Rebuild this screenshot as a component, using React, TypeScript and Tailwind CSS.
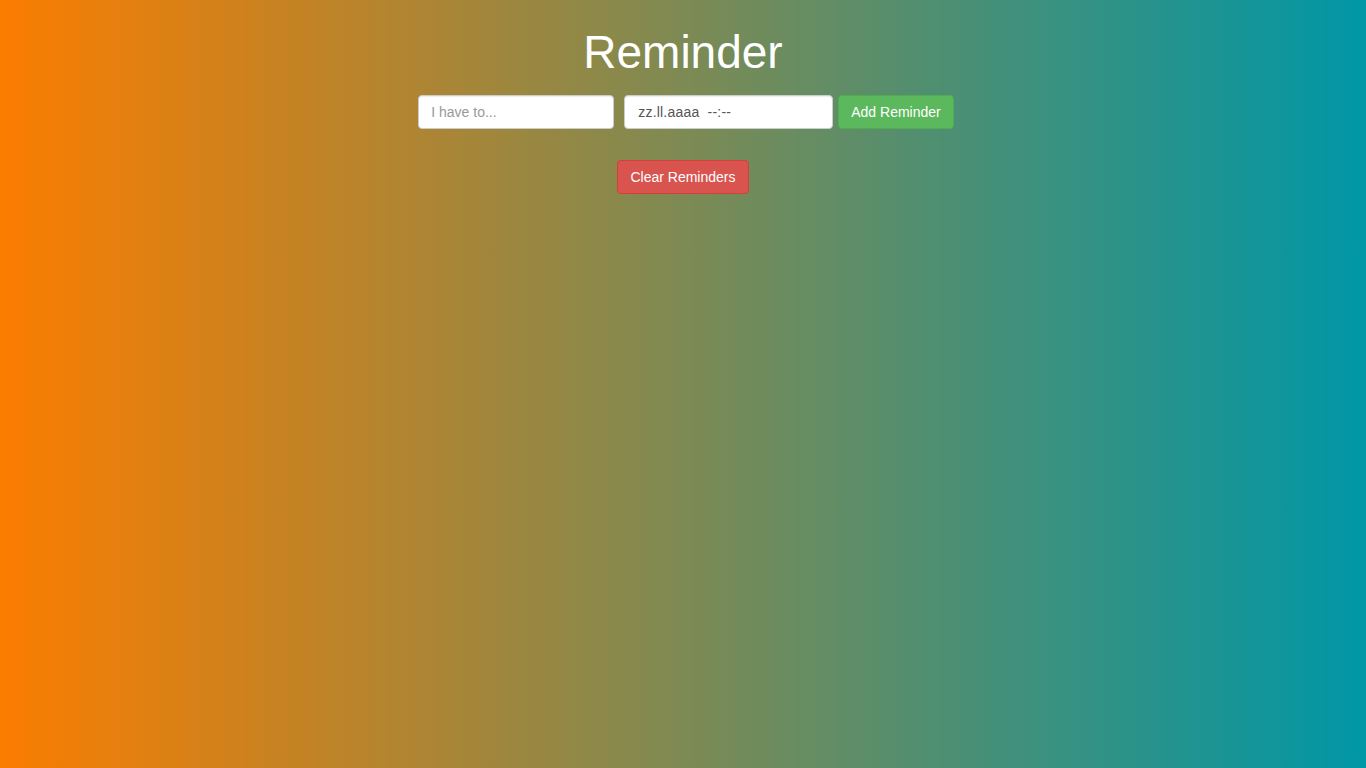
import React, { useState } from "react";

const App: React.FC = () => {
  const [text, setText] = useState("");

  return (
    <div
      className="w-full min-h-[768px] bg-[linear-gradient(to_right,#fb7d00,#0097a6)] text-white"
      style={{ fontFamily: '"Liberation Sans", Arial, sans-serif' }}
    >
      <div className="flex flex-col items-center">
        <h1 className="mt-[27px] text-[46px] leading-[50px] font-normal">Reminder</h1>

        {/* Form */}
        <div className="mt-[18px] ml-[6px] flex items-center">
          <input
            type="text"
            placeholder="I have to..."
            value={text}
            onChange={(e) => setText(e.target.value)}
            className="w-[196px] h-[34px] px-3 text-[14px] text-[#555] bg-white border border-[#ccc] rounded-[4px] shadow-[inset_0_1px_1px_rgba(0,0,0,0.075)] placeholder:text-[#999] outline-none"
          />
          <input
            type="text"
            readOnly
            value="zz.ll.aaaa  --:--"
            className="ml-[10px] w-[209px] h-[34px] pl-[13px] pr-3 text-[14px] tracking-[0.2px] text-[#555] bg-white border border-[#ccc] rounded-[4px] shadow-[inset_0_1px_1px_rgba(0,0,0,0.075)] outline-none whitespace-pre"
          />
          <button className="ml-[5px] h-[34px] px-3 text-[14px] text-white bg-[#5cb85c] border border-[#4cae4c] rounded-[4px]">
            Add Reminder
          </button>
        </div>

        <button className="mt-[31px] h-[34px] px-3 text-[14px] text-white bg-[#d9534f] border border-[#d43f3a] rounded-[4px]">
          Clear Reminders
        </button>
      </div>
    </div>
  );
};

export default App;
